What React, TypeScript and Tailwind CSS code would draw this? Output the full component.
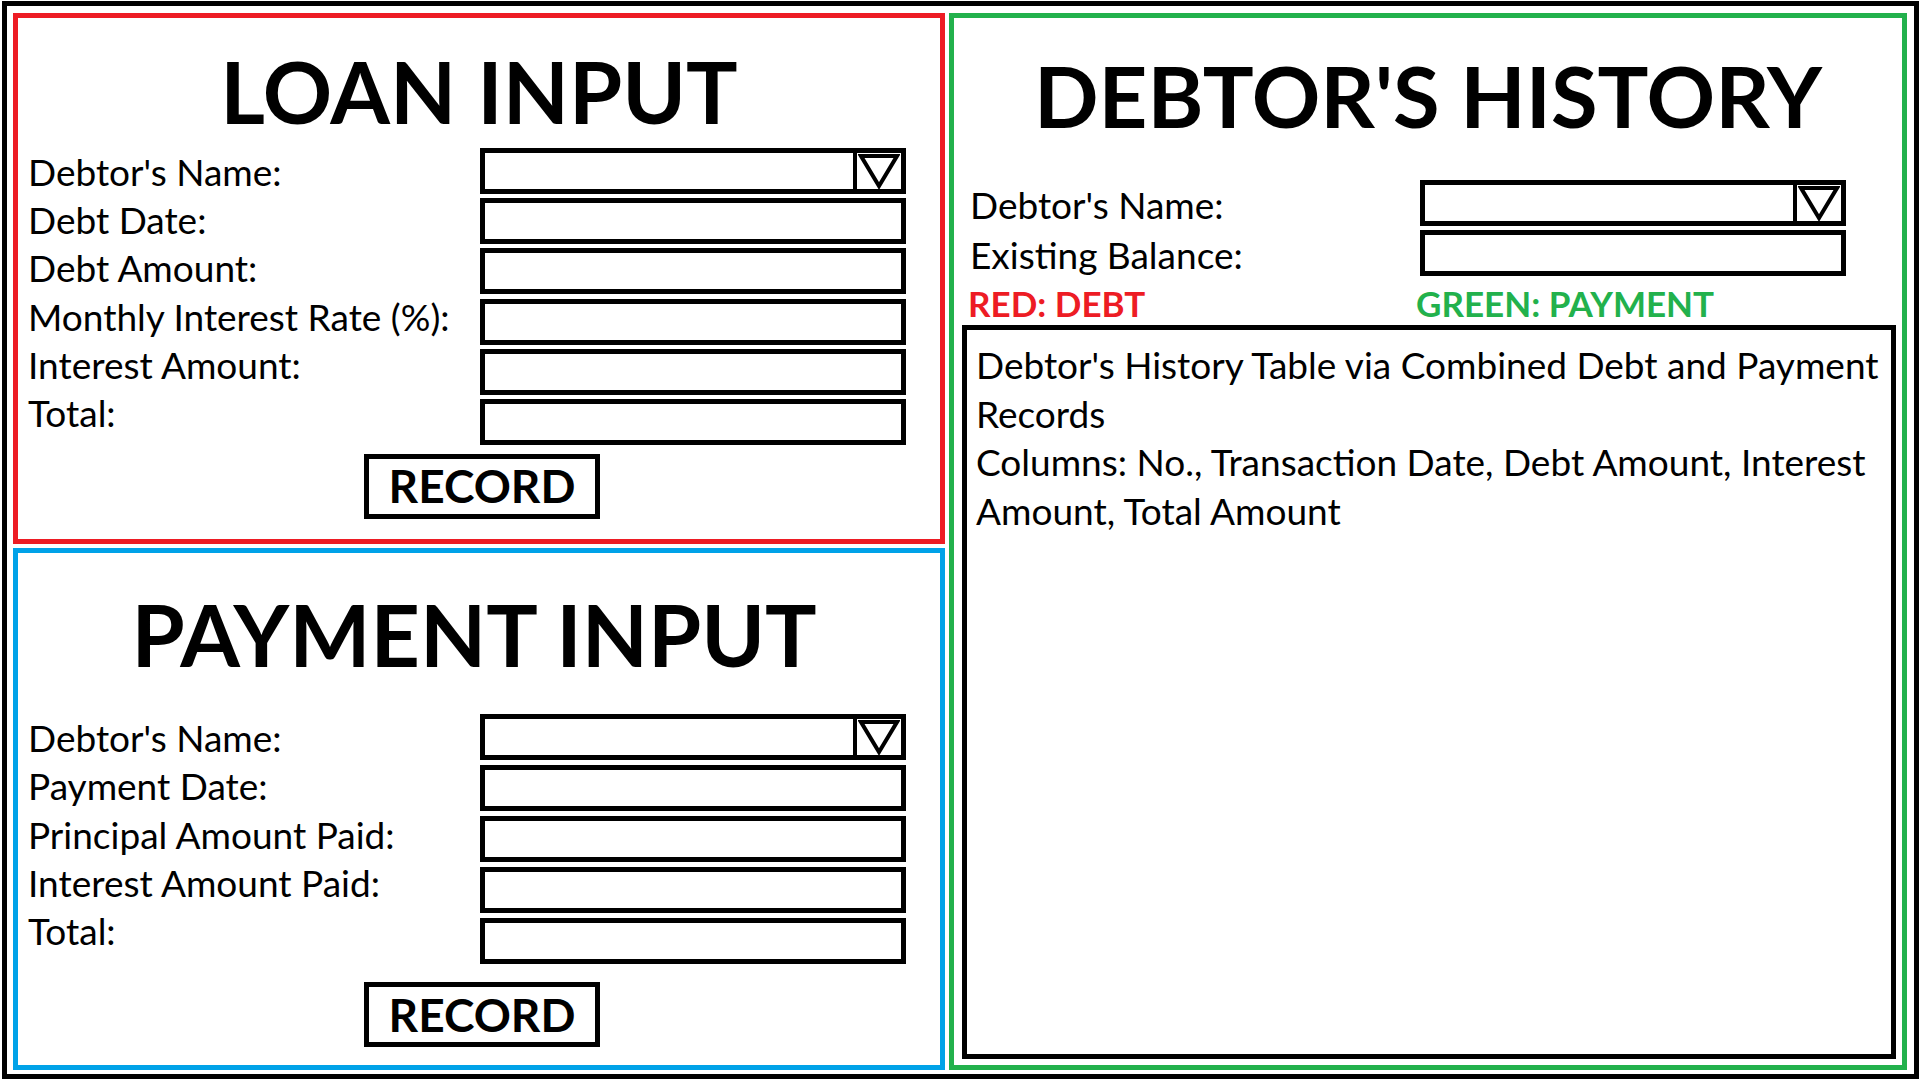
import React from "react";

const FONT = "font-['Lato','Liberation_Sans',sans-serif]";

function Box({ h = "h-[46px]" }: { h?: string }) {
  return <div className={`${h} w-full border-[5px] border-black bg-white`} />;
}

function Dropdown() {
  return (
    <div className="flex h-[46px] w-full border-[5px] border-black bg-white">
      <div className="flex-1" />
      <div className="flex w-[48px] items-center justify-center border-l-[4px] border-black">
        <svg width="42" height="36" viewBox="0 0 42 36">
          <path d="M3 3 H39 L21 33 Z" fill="none" stroke="black" strokeWidth="4" strokeLinejoin="miter" />
        </svg>
      </div>
    </div>
  );
}

function RecordButton({ mt }: { mt: string }) {
  return (
    <div
      className={`${mt} ml-[346px] flex h-[65px] w-[236px] items-center justify-center border-[5px] border-black text-[46px] font-bold leading-none text-black`}
    >
      RECORD
    </div>
  );
}

export default function App() {
  return (
    <div className={`${FONT} h-[1080px] w-[1920px] bg-white pl-[2px] pt-[1px] text-black`}>
      <div className="flex h-[1078px] w-[1917px] gap-[4px] border-[5px] border-black pl-[6px] pt-[7px]">
        {/* Left column */}
        <div className="flex w-[932px] flex-col gap-[4px]">
          {/* LOAN INPUT */}
          <div className="flex h-[531px] flex-col border-[5px] border-[#ed1c24]">
            <h1 className="mt-[30px] text-center text-[86px] font-bold leading-[86px]">LOAN INPUT</h1>
            <div className="mt-[14px] flex pl-[10px]">
              <div className="w-[452px] text-[37px] leading-[48.2px]">
                <div>Debtor's Name:</div>
                <div>Debt Date:</div>
                <div>Debt Amount:</div>
                <div>Monthly Interest Rate (%):</div>
                <div>Interest Amount:</div>
                <div>Total:</div>
              </div>
              <div className="flex w-[426px] flex-col gap-[4.2px]">
                <Dropdown />
                <Box />
                <Box />
                <Box />
                <Box />
                <Box />
              </div>
            </div>
            <RecordButton mt="mt-[9px]" />
          </div>

          {/* PAYMENT INPUT */}
          <div className="flex h-[522px] flex-col border-[5px] border-[#00a2e8]">
            <h1 className="mr-[10px] mt-[38px] text-center text-[86px] font-bold leading-[86px]">PAYMENT INPUT</h1>
            <div className="mt-[37px] flex pl-[10px]">
              <div className="w-[452px] text-[37px] leading-[48.3px]">
                <div>Debtor's Name:</div>
                <div>Payment Date:</div>
                <div>Principal Amount Paid:</div>
                <div>Interest Amount Paid:</div>
                <div>Total:</div>
              </div>
              <div className="flex w-[426px] flex-col gap-[5px]">
                <Dropdown />
                <Box />
                <Box />
                <Box />
                <Box />
              </div>
            </div>
            <RecordButton mt="mt-[18px]" />
          </div>
        </div>

        {/* DEBTOR'S HISTORY */}
        <div className="flex h-[1057px] w-[958px] flex-col border-[5px] border-[#22b14c]">
          <h1 className="mt-[34px] text-center text-[85px] font-bold leading-[86px]">DEBTOR'S HISTORY</h1>
          <div className="mt-[42px] flex pl-[16px]">
            <div className="w-[450px] text-[37px] leading-[50px]">
              <div>Debtor's Name:</div>
              <div>Existing Balance:</div>
            </div>
            <div className="flex w-[426px] flex-col gap-[4px]">
              <Dropdown />
              <Box />
            </div>
          </div>
          <div className="mt-[3px] flex pl-[14px] text-[35px] font-bold leading-[40px]">
            <span className="w-[448px] text-[#ed1c24]">RED: DEBT</span>
            <span className="text-[#22b14c]">GREEN: PAYMENT</span>
          </div>
          <div className="ml-[8px] mt-[2px] h-[734px] w-[934px] border-[5px] border-black pl-[9px] pt-[11px] text-[37px] leading-[48.5px]">
            <div className="whitespace-nowrap">Debtor's History Table via Combined Debt and Payment</div>
            <div>Records</div>
            <div className="whitespace-nowrap">Columns: No., Transaction Date, Debt Amount, Interest</div>
            <div>Amount, Total Amount</div>
          </div>
        </div>
      </div>
    </div>
  );
}
